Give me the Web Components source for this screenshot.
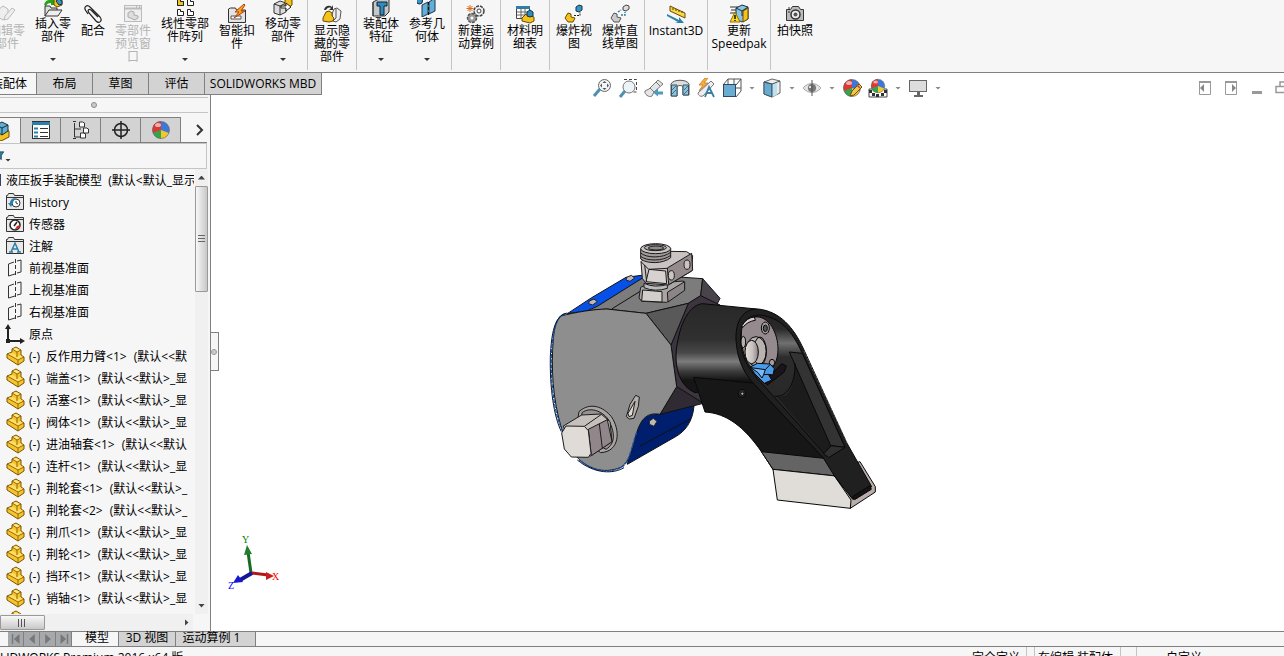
<!DOCTYPE html>
<html lang="zh-CN">
<head>
<meta charset="utf-8">
<title>SOLIDWORKS</title>
<style>
  html, body { margin: 0; height: 100%; overflow: hidden; }
  body { font: 12px/13px "Open Sans", "Noto Sans CJK SC", sans-serif; color: #000; background: #fff; }
</style>
</head>
<body>
<cad-app></cad-app>

<script>
const part = `<path d="M2 8l5-2V3l4-2 5 3v5l3 2v4l-6 4-11-7z" fill="#f7c52b" stroke="#7a5500"/><path d="M3 8l5-1 3 2v2l4-2 3 2-5 3z" fill="#ffdc66"/><path d="M8 3l3-1 4 2-3 2z" fill="#ffe68a"/><path d="M7 3l5 3 4-2M12 6v5M2 8l11 6 6-3M13 14v5" fill="none" stroke="#7a5500" stroke-width=".8"/>`;
const folder = `<path d="M1.500 17.500v-14h1l1-2h5l1 2h9v14z" fill="#e8e8e8" stroke="#333"/><path d="M2 5.500h16" stroke="#333"/>`;
const ball = `<circle cx="10" cy="10" r="8.500" fill="#3d78d8"/><path d="M10 10L2 6a9 9 0 0 1 8-4.500z" fill="#e03c30"/><path d="M10 10V1.500A8.500 8.500 0 0 0 2 13z" fill="#df3830"/><path d="M10 10L2 13a8.500 8.500 0 0 0 8 5.500z" fill="#37a547"/><path d="M10 10v8.500a8.500 8.500 0 0 0 8-5.500z" fill="#f0c72c"/><ellipse cx="7" cy="5" rx="3" ry="2" fill="#fff" opacity=".6"/><circle cx="10" cy="10" r="8.500" fill="none" stroke="#666" stroke-opacity=".6"/>`;

// all icons are drawn on a 20x20 grid
const icons = {
  part,
  edit: `<g fill="#eee" stroke="#bbb"><path d="M1 6l5-4 5 3v7l-5 4-5-3z"/><path d="M8 12l7-8 3 2-7 9-4 1z"/></g>`,
  insert: `<path d="M1 8c1-4 3-5 6-5V0h5v8H8V6C5 6 4 7 3 9z" fill="#27a31d"/><path d="M11 3l4-3 4 2v6l-5 2-3-2z" fill="#f4c21d" stroke="#6b4b00"/><path d="M13 4l3-2 3 2v3l-3 1z" fill="#3a93c4" stroke="#134"/><path d="M2 19V9h5l1 2h6v3" fill="#ddd" stroke="#333"/><path d="M2 19l4-6h13l-4 6z" fill="#eee" stroke="#333"/>`,
  clip: `<path d="M5 10L3 7C0 3 4 0 7 3l10 10c3 4-1 7-4 4L6 9C4 6 6 4 9 7l6 6" fill="none" stroke="#222" stroke-width="1.200"/>`,
  preview: `<rect x="1.500" y="1.500" width="17" height="16" fill="#eee" stroke="#bbb"/><path d="M2 4.500h16M13 3h1M16 3h1" stroke="#bbb" stroke-width="2"/><path d="M5 9l3-2 3 1v3l4 1v2l-3 2-7-3z" fill="#ddd" stroke="#aaa"/>`,
  pattern: `<g fill="#fff" stroke="#222"><path d="M2.500 2.500h3v2h3v4h-6zM12.500 2.500h3v2h3v4h-6zM2.500 12.500h3v2h3v4h-6zM12.500 12.500h3v2h3v4h-6z"/><path d="M2.500 2.500h3v2h3v4h-6z" fill="#f4c21d"/></g>`,
  smart: `<path d="M1.500 18.500V5l2-1h5l1 2h9v12.500z" fill="#e4e4e4" stroke="#333"/><path d="M4 12h10v3H4z" fill="#fff" stroke="#555"/><path d="M17 0L8 8h4l-5 6 11-7h-4l4-6z" fill="#f8a51b" stroke="#b33f0b"/>`,
  move: `<path d="M1 7l6-3 6 2v9l-6 3-6-2z" fill="#ddd" stroke="#333"/><path d="M1 7l6 2 6-3M7 9v9" fill="none" stroke="#333"/><path d="M12 3l4-2 3 2v5l-4 3-3-2z" fill="#f4c21d" stroke="#6b4b00"/><path d="M8 9h5V6l5 4-5 4v-3H8z" fill="#fff" stroke="#222"/>`,
  showhide: `<path d="M2 6c1-5 6-5 8-3l1-2v5H7l2-2C7 3 5 4 4 6z" fill="#333"/><path d="M10 10l2-5 3-1 4 3-1 8-4 3-3-1z" fill="#eee" stroke="#555"/><path d="M14 5v9l-3 3" fill="none" stroke="#555"/><path d="M1 14l3-6 3-1 3 2v3l2 2-1 3-4 1-6-1z" fill="#f4c21d" stroke="#6b4b00"/>`,
  feature: `<path d="M2 5l6-3h10v13l-4 4H2z" fill="#c3c8cc" stroke="#333"/><path d="M6 5h10v4h-3v9H9V9H6z" fill="#318cb9" stroke="#123"/><path d="M2 5v14" stroke="#333"/>`,
  refgeo: `<circle cx="2.500" cy="4" r="3" fill="#3b95c4" stroke="#124"/><path d="M5 8l6-3v12l-6 3zM12 5l6-4v13l-6 3z" fill="#61b0d5" stroke="#235"/><path d="M11.500 0v20" stroke="#111" stroke-dasharray="3 2"/>`,
  motion: `<circle cx="13" cy="7" r="5" fill="#eee" stroke="#444" stroke-width="1.500" stroke-dasharray="3 1"/><circle cx="13" cy="7" r="2" fill="#fff" stroke="#444"/><circle cx="6" cy="14" r="4.500" fill="#999" stroke="#555" stroke-width="1.500" stroke-dasharray="3 1"/><circle cx="6" cy="14" r="1.500" fill="#fff"/><path d="M4 1v7M0.500 4.500h7M1.500 2l5 5M6.500 2l-5 5" stroke="#e46a12"/>`,
  bom: `<path d="M1.500 2.500h13v12h-13z" fill="#fff" stroke="#444"/><path d="M1 3.500h14" stroke="#2b7fa9" stroke-width="3"/><path d="M2 8h12M2 11h12M6 4v10M10 4v10" stroke="#666"/><path d="M7 14l4-4 8 3v4l-4 2-8-2z" fill="#f4c21d" stroke="#6b4b00"/><path d="M12 8l3-2 3 2v4l-3 1-3-1z" fill="#2f8bc0" stroke="#134"/>`,
  explode: `<path d="M1 14l3-5 3 1v3l4 1-2 4H4z" fill="#f4c21d" stroke="#6b4b00"/><path d="M12 3l3-2 3 1v4l-3 2-3-1z" fill="#3b95c4" stroke="#134"/><path d="M10 11.500h6V8" fill="none" stroke="#222" stroke-dasharray="2 1"/>`,
  explodeline: `<path d="M1 14l3-5 3 1v3l4 1-2 4H4z" fill="#ccc" stroke="#555"/><path d="M13 3l3-2 3 1v3l-3 2-3-1z" fill="#ddd" stroke="#444"/><path d="M8 8l3-2m0 5h4V8" fill="none" stroke="#2b7fa9" stroke-dasharray="2 1" stroke-width="1.500"/>`,
  instant: `<path d="M4 2l15 7v5L4 7z" fill="#f8d64a" stroke="#6b4b00"/><path d="M7 4v2m3-1v2m3-1v2m3-1v2" stroke="#5a4300"/><path d="M1 10l12 6v-3l5 6H9l3-1L1 12z" fill="#2f80a8"/>`,
  speedpak: `<path d="M1 3h8M2 6h6M1 9h6" stroke="#333"/><path d="M7 4l6-3 6 2v12l-6 3-6-3z" fill="#8fc3df" stroke="#134"/><path d="M14 7l5-3v11l-5 3z" fill="#f4c21d" stroke="#6b4b00"/><path d="M7 4l6 3 6-4M13 7v5" stroke="#134" fill="none"/><path d="M6 8l5 10H1z" fill="#ffd91c" stroke="#907000"/><path d="M6 11v4m0 1v1" stroke="#111" stroke-width="1.500"/>`,
  camera: `<path d="M1.500 5.500h4l2-3h6l2 3h3v11h-17z" fill="#bbb" stroke="#333"/><circle cx="10.500" cy="10.500" r="4.500" fill="#eee" stroke="#333" stroke-width="1.500"/><circle cx="10.500" cy="10.500" r="2" fill="#555"/><path d="M3 8h2M3 4h2" stroke="#333"/>`,
  zoomfit: `<circle cx="12.500" cy="7.500" r="6" fill="#f2f6f8" stroke="#666"/><path d="M8 11l-6 7" stroke="#4f8fb0" stroke-width="3"/><path d="M12.500 3l2 2h-4zM12.500 12l2-2h-4zM8 7.500l2-2v4zM17 7.500l-2-2v4z" fill="#555"/>`,
  zoomarea: `<path d="M6 1.500h12.500V14H15" fill="none" stroke="#444" stroke-dasharray="3 2"/><circle cx="11" cy="9" r="6" fill="#edf4f7" stroke="#777"/><path d="M7 13l-5 6" stroke="#4f8fb0" stroke-width="3"/>`,
  prevview: `<path d="M1 13l4-2 9-9 5 4-9 8-2 4c-3 2-8-2-7-5z" fill="#e5e5e5" stroke="#777"/><path d="M6 10l4 4M12 4l4 4" stroke="#777"/><path d="M9 14.500l5-4v3h5v3h-5v2z" fill="#4f9bc0"/>`,
  section: `<path d="M1 6c2-5 16-5 18 0v11h-6V9c-1-2-5-2-6 0v9H1z" fill="#ddd" stroke="#555"/><path d="M1.500 7h5.500v11h-5.500zM13 7h5.500v10H13z" fill="#8fc3dc" stroke="#356"/><path d="M2 12l4-4M2 16l4-4M14 12l4-4M14 16l4-4" stroke="#356" stroke-width=".8"/>`,
  annot: `<path d="M9 0L3 7h4l-4 6 9-8H8l4-5z" fill="#f9ae40" stroke="#d08a30"/><path d="M2 15L15 3l3 3L7 18c-3 1-5-1-5-3z" fill="#eee" stroke="#777"/><path d="M9 19l4-10 5 10M11 15h5" fill="none" stroke="#397fa6" stroke-width="1.800"/>`,
  orient: `<path d="M1 7l5-6h13v12l-5 6M6 1v6M14 7l5-6M14 10h5M12 1v6" fill="none" stroke="#555"/><rect x="1.500" y="6.500" width="12" height="12" fill="#6badd0" stroke="#346"/>`,
  display: `<path d="M2 4l8-3 8 2v12l-8 4-8-3z" fill="#eee" stroke="#666"/><path d="M2 4l8 2v13l-8-3z" fill="#65acd0" stroke="#456"/><path d="M10 6l5-2v13l-5 2z" fill="#bfe1ee"/><path d="M2 4l8 2 8-3M10 6v13" fill="none" stroke="#456"/>`,
  eye: `<path d="M1 10c5-6 13-6 18 0-5 6-13 6-18 0z" fill="#e2e2e2" stroke="#aaa"/><circle cx="10" cy="10" r="4" fill="#777"/><path d="M10 2v16" stroke="#555"/><circle cx="8" cy="9" r="1" fill="#fff"/>`,
  ball,
  ballpen: ball + `<path d="M8 18l2-5 7-7 3 3-8 8z" fill="#f3c84a" stroke="#6e4d12"/><path d="M15 7l3 3" stroke="#b44" stroke-width="1.500"/>`,
  scene: `<path d="M1 11h18v8H1z" fill="#fff" stroke="#444"/><path d="M1 12h3v3H1zM4 15h3v3H4zM8 16h3v3H8zM13 15h3v3h-3zM16 12h3v3h-3z" fill="#333"/><g transform="translate(2 0) scale(.8)">${ball}</g>`,
  monitor: `<rect x="1.500" y="2.500" width="17" height="11" fill="#ddd" stroke="#666"/><path d="M9 14h3v3h3v2H6v-2h3z" fill="#666"/>`,
  cube: `<path d="M1 10l8-4 9 4v6l-8 4-9-5z" fill="#f4c21d" stroke="#6b4b00"/><path d="M5 4l6-3 6 3v6l-6 4-6-4z" fill="#65acd0" stroke="#134"/><path d="M5 4l6 3 6-3M11 7v7" fill="none" stroke="#134"/>`,
  props: `<rect x="1.500" y="1.500" width="17" height="17" fill="#fff" stroke="#333"/><path d="M1 3.500h18" stroke="#2d7fa8" stroke-width="3"/><path d="M3 8.500h4M3 12.500h4M3 16.500h4" stroke="#2d7fa8" stroke-width="2"/><path d="M9 8.500h8M9 12.500h8M9 16.500h8" stroke="#333"/>`,
  config: `<path d="M3.500 3v14h8M4 9h6M2 1.500h3M2 18.500h3" fill="none" stroke="#333"/><g fill="#fff" stroke="#333"><path d="M8.500 2h3l2 1v4h-5zM12.500 8h3l2 1v4h-5zM9.500 13h3l2 1v4h-5z"/></g>`,
  target: `<circle cx="10" cy="10" r="6.500" fill="none" stroke="#222" stroke-width="1.500"/><path d="M10 1v18M1 10h18" stroke="#222" stroke-width="1.500"/>`,
  chevron: `<path d="M7 5l5 5-5 5" fill="none" stroke="#333" stroke-width="2"/>`,
  filter: `<path d="M6 3h12l-4 6v7l-3-2V9z" fill="#2d7fa8" stroke="#123"/>`,
  history: folder + `<circle cx="11" cy="11" r="4" fill="#fff" stroke="#333"/><path d="M11 9v2l2 1" stroke="#333" fill="none"/><path d="M3 11l3 4 2-4c0-2 2-4 4-4-4-2-7 1-7 4z" fill="#2d7fa8"/>`,
  sensor: folder + `<circle cx="10" cy="11" r="5" fill="#fff" stroke="#222" stroke-width="1.500"/><path d="M9 12l3-4" stroke="#222" stroke-width="1.500"/><path d="M10 15l2-3 3-1c0 3-2 4-5 4z" fill="#d82a1c"/>`,
  note: folder + `<path d="M6 16l4-9 4 9M7 13h6M4 16h4M12 16h4" fill="none" stroke="#2d7fa8" stroke-width="1.500"/>`,
  plane: `<path d="M9 4L3.500 6v12L10 16M12 3l4-1v12l-4 1" fill="none" stroke="#333"/><path d="M10.500 1v18" stroke="#333" stroke-dasharray="4 2"/>`,
  origin: `<path d="M3 3v14h13" fill="none" stroke="#222" stroke-width="2"/><path d="M0 5l3-5 3 5zM15 14l5 3-5 3zM1 15h4v4H1z" fill="#222"/>`,
  paneleft: `<path d="M4.500 4v12.500h11V4z" fill="none" stroke="#999"/><path d="M4 4h12" stroke="#999" stroke-width="2"/><path d="M9 6v8l-4-4z" fill="#888"/>`,
  paneright: `<path d="M4.500 4v12.500h11V4z" fill="none" stroke="#999"/><path d="M4 4h12" stroke="#999" stroke-width="2"/><path d="M11 6v8l4-4z" fill="#888"/>`,
  minimize: `<path d="M5 14.500h10" stroke="#999" stroke-width="3"/>`,
  restore: `<path d="M3 8.500h9v6H3zM7 8V4h9v8" fill="none" stroke="#999" stroke-width="1.500"/>`,
  first: `<path d="M5 3v14" stroke="#777" stroke-width="2"/><path d="M15 3v14l-8-7z" fill="#777"/>`,
  back: `<path d="M14 3v14l-8-7z" fill="#777"/>`,
  next: `<path d="M6 3v14l8-7z" fill="#777"/>`,
  last: `<path d="M15 3v14" stroke="#777" stroke-width="2"/><path d="M5 3v14l8-7z" fill="#777"/>`
};

function define(name, css, html) {
  customElements.define(name, class extends HTMLElement {
    constructor() {
      super();
      this.attachShadow({ mode: "open" });
    }
    connectedCallback() {
      const markup = typeof html === "function" ? html(this) : html;
      this.shadowRoot.innerHTML = `<style>${css}</style>${markup}`;
    }
  });
}

const reset = `button { font: inherit; color: inherit; background: none; border: 0; padding: 0; margin: 0; }`;

define("cad-icon", `
  :host { display: block; flex: none; width: 20px; height: 20px; }
  svg { display: block; width: 100%; height: 100%; }
`, el => `<svg viewBox="0 0 20 20" aria-hidden="true">${icons[el.getAttribute("name")] || ""}</svg>`);

define("drop-caret", `
  :host { display: block; flex: none; width: 6px; height: 3px; background: var(--caret, #333); clip-path: polygon(0 0, 100% 0, 50% 100%); }
`, ``);

define("ribbon-button", reset + `
  :host { display: block; flex: none; width: 46px; height: 72px; }
  :host([size="narrow"]) { width: 34px; }
  :host([size="wide"]) { width: 58px; }
  :host([size="latin"]) { width: 60px; }
  :host([drop]) button { margin-top: -7px; }
  :host([disabled]) button { color: #b4b4b4; }
  button { width: 100%; height: 72px; padding: 4px 2px 0; display: flex; flex-direction: column; align-items: center; position: relative; }
  drop-caret { position: absolute; bottom: 4px; }
`, el => `<button ${el.hasAttribute("disabled") ? "disabled" : ""}>
  <cad-icon name="${el.getAttribute("icon")}"></cad-icon>
  <span><slot></slot></span>
  ${el.hasAttribute("drop") ? "<drop-caret></drop-caret>" : ""}
</button>`);

define("ribbon-bar", `
  :host { display: flex; height: 72px; overflow: hidden; background: #f6f6f6; border-bottom: 1px solid #808080; }
  i { flex: none; width: 1px; height: 70px; margin: 0 1px; background: #c4c4c4; }
  style + ribbon-button { margin-left: -16px; }
`, `
  <ribbon-button icon="edit" disabled>编辑零部件</ribbon-button>
  <ribbon-button icon="insert" drop>插入零部件</ribbon-button>
  <ribbon-button icon="clip" size="narrow">配合</ribbon-button>
  <ribbon-button icon="preview" disabled>零部件预览窗口</ribbon-button>
  <ribbon-button icon="pattern" size="wide" drop>线性零部件阵列</ribbon-button>
  <ribbon-button icon="smart">智能扣件</ribbon-button>
  <ribbon-button icon="move" drop>移动零部件</ribbon-button><i></i>
  <ribbon-button icon="showhide">显示隐藏的零部件</ribbon-button><i></i>
  <ribbon-button icon="feature" drop>装配体特征</ribbon-button>
  <ribbon-button icon="refgeo" drop>参考几何体</ribbon-button><i></i>
  <ribbon-button icon="motion">新建运动算例</ribbon-button><i></i>
  <ribbon-button icon="bom">材料明细表</ribbon-button><i></i>
  <ribbon-button icon="explode">爆炸视图</ribbon-button>
  <ribbon-button icon="explodeline">爆炸直线草图</ribbon-button><i></i>
  <ribbon-button icon="instant" size="latin">Instant3D</ribbon-button><i></i>
  <ribbon-button icon="speedpak" size="latin">更新 Speedpak</ribbon-button><i></i>
  <ribbon-button icon="camera">拍快照</ribbon-button>
`);

define("command-tabs", reset + `
  :host { display: flex; flex: none; height: 22px; background: #d3d3d3; border-bottom: 1px solid #808080; box-sizing: border-box; }
  button { width: 56px; border-right: 1px solid #808080; white-space: nowrap; display: flex; align-items: center; justify-content: center; }
  button.on { width: 37px; justify-content: flex-end; padding-right: 9px; background: #f6f6f6; overflow: hidden; box-sizing: border-box; }
  button:last-child { width: 117px; }
`, `
  <button class="on">装配体</button><button>布局</button><button>草图</button><button>评估</button><button>SOLIDWORKS MBD</button>
`);

// view toolbar floating over the top of the graphics area
define("view-toolbar", reset + `
  :host { display: flex; flex: 1; height: 30px; padding-left: 20px; justify-content: center; align-items: center; --caret: #888; }
  button { width: 26px; height: 26px; display: grid; place-items: center; }
  button.d { width: 14px; }
`, () => ["zoomfit", "zoomarea", "prevview", "section", "annot", "orient", "", "display", "", "eye", "", "ballpen", "scene", "", "monitor", ""]
  .map(n => n ? `<button><cad-icon name="${n}"></cad-icon></button>` : `<button class="d"><drop-caret></drop-caret></button>`).join(""));

define("window-controls", reset + `
  :host { display: flex; flex: none; width: 92px; height: 30px; overflow: hidden; align-items: center; }
  button { flex: none; width: 26px; display: grid; place-items: center; }
`, () => ["paneleft", "paneright", "minimize", "restore"].map(n => `<button><cad-icon name="${n}"></cad-icon></button>`).join(""));

define("manager-tabs", reset + `
  :host { display: flex; height: 26px; margin-top: 4px; margin-right: 3px; border-bottom: 1px solid #808080; box-sizing: border-box; }
  button { flex: none; box-sizing: border-box; width: 40px; border-top: 1px solid #808080; border-right: 1px solid #808080; background: #d3d3d3; display: flex; align-items: center; justify-content: center; }
  button.on { width: 21px; background: #f6f6f6; justify-content: flex-end; padding-right: 9px; overflow: hidden; margin-bottom: -1px; }
  button.more { flex: 1; min-width: 0; background: none; border: 0; padding-left: 12px; }
`, `
  <button class="on"><cad-icon name="cube"></cad-icon></button>
  <button><cad-icon name="props"></cad-icon></button>
  <button><cad-icon name="config"></cad-icon></button>
  <button><cad-icon name="target"></cad-icon></button>
  <button><cad-icon name="ball"></cad-icon></button>
  <button class="more"><cad-icon name="chevron"></cad-icon></button>
`);

define("tree-item", `
  :host { display: flex; align-items: center; height: 22px; gap: 4px; padding-left: 5px; white-space: pre; }
  :host([root]) { padding-left: 0; gap: 5px; }
  b { flex: none; width: 1px; height: 12px; background: #346; }
`, el => (el.hasAttribute("root") ? `<b></b>` : `<cad-icon name="${el.getAttribute("icon") || "part"}"></cad-icon>`) + `<span><slot></slot></span>`);

define("scroll-bar", reset + `
  :host { display: flex; background: #f0f0f0; }
  :host([dir="v"]) { flex-direction: column; width: 13px; margin-right: 2px; }
  :host([dir="h"]) { height: 17px; margin-right: 17px; align-items: center; }
  button { flex: none; display: grid; place-items: center; width: 13px; height: 17px; }
  .thumb { box-sizing: border-box; border: 1px solid #999; border-radius: 1px; display: flex; align-items: center; justify-content: center; }
  :host([dir="v"]) .thumb { height: 106px; background: linear-gradient(90deg, #f8f8f8, #c8c8c8); }
  :host([dir="h"]) .thumb { width: 45px; height: 15px; background: linear-gradient(#f8f8f8, #c8c8c8); }
  .grip { width: 7px; height: 8px; background: repeating-linear-gradient(#666 0 1px, transparent 1px 3px); }
  :host([dir="h"]) .grip { width: 9px; background: repeating-linear-gradient(90deg, #555 0 1px, transparent 1px 3px); }
  .room { flex: 1; }
  .up, .down { width: 7px; height: 4px; background: #444; clip-path: polygon(50% 0, 100% 100%, 0 100%); }
  .down { clip-path: polygon(0 0, 100% 0, 50% 100%); }
  .right { width: 4px; height: 7px; background: #444; clip-path: polygon(0 0, 100% 50%, 0 100%); }
`, el => el.getAttribute("dir") === "v"
  ? `<button><i class="up"></i></button><div class="thumb"><i class="grip"></i></div><div class="room"></div><button><i class="down"></i></button>`
  : `<div class="thumb"><i class="grip"></i></div><div class="room"></div><button><i class="right"></i></button>`);

const parts = ["反作用力臂<1>", "端盖<1>", "活塞<1>", "阀体<1>", "进油轴套<1>", "连杆<1>", "荆轮套<1>", "荆轮套<2>", "荆爪<1>", "荆轮<1>", "挡环<1>", "销轴<1>"];
const tails = { "反作用力臂<1>": "默", "进油轴套<1>": "默认", "荆轮套<1>": "默认>_", "荆轮套<2>": "默认>_" };
const esc = s => s.replace(/</g, "&lt;").replace(/>/g, "&gt;");

define("feature-panel", reset + `
  :host { box-sizing: border-box; flex: none; width: 211px; display: flex; flex-direction: column; background: #f6f6f6; border-right: 1px solid #808080; }
  .split { height: 14px; margin: 2px 2px 0 0; border: solid #c4c4c4; border-width: 1px 0; display: grid; place-items: center; padding-right: 20px; }
  .split i { width: 4px; height: 4px; border: 1px solid #888; border-radius: 50%; background: #ccc; }
  .filter { box-sizing: border-box; height: 26px; margin-right: 3px; border: 1px solid #c4c4c4; border-left: 0; display: flex; align-items: center; overflow: hidden; }
  .filter cad-icon { width: 12px; height: 12px; margin-left: -7px; }
  .filter drop-caret { margin-top: 8px; }
  .body { flex: 1; display: flex; min-height: 0; }
  .tree { flex: 1; min-width: 0; overflow: hidden; margin-right: 1px; }
  .tree span { margin: 0 4px 0 3px; }
`, () => `
  <div class="split"><i></i></div>
  <manager-tabs></manager-tabs>
  <button class="filter" aria-label="过滤器"><cad-icon name="filter"></cad-icon><drop-caret></drop-caret></button>
  <div class="body">
    <div class="tree">
      <tree-item root>液压扳手装配模型  (默认&lt;默认_显示</tree-item>
      <tree-item icon="history">History</tree-item>
      <tree-item icon="sensor">传感器</tree-item>
      <tree-item icon="note">注解</tree-item>
      <tree-item icon="plane">前视基准面</tree-item>
      <tree-item icon="plane">上视基准面</tree-item>
      <tree-item icon="plane">右视基准面</tree-item>
      <tree-item icon="origin">原点</tree-item>
      ${parts.map(p => `<tree-item>(-) <span>${esc(p)}</span> (默认&lt;&lt;${esc(tails[p] || "默认>_显")}</tree-item>`).join("")}
      <tree-item></tree-item>
    </div>
    <scroll-bar dir="v"></scroll-bar>
  </div>
  <scroll-bar dir="h"></scroll-bar>
`);

// hydraulic wrench, 3 units to the pixel
define("wrench-model", `
  :host { display: block; width: 350px; height: 285px; }
  svg { display: block; width: 100%; height: 100%; }
`, `
<svg viewBox="0 0 1050 855" stroke-linejoin="round">
  <defs>
    <linearGradient id="cyl" x1="0" y1="0" x2="0" y2="1">
      <stop offset="0" stop-color="#282828"/><stop offset=".4" stop-color="#303030"/><stop offset=".55" stop-color="#484848"/>
      <stop offset=".65" stop-color="#7c7c7c"/><stop offset=".76" stop-color="#3c3c3c"/><stop offset=".86" stop-color="#151515"/><stop offset="1" stop-color="#151515"/>
    </linearGradient>
    <linearGradient id="bore" x1="0" y1="0" x2="0" y2="1">
      <stop offset="0" stop-color="#222"/><stop offset=".1" stop-color="#2a2a2a"/><stop offset=".2" stop-color="#707070"/><stop offset=".3" stop-color="#2c2c2c"/><stop offset="1" stop-color="#222"/>
    </linearGradient>
    <linearGradient id="nut"><stop offset="0" stop-color="#e4dfda"/><stop offset=".55" stop-color="#c9c3c0"/><stop offset="1" stop-color="#8c8285"/></linearGradient>
  </defs>
  <g stroke="#111" stroke-width="3">
    <path fill="#001e6e" d="M330 533L462 513C458 560 435 590 405 606L262 688 280 600Q300 545 330 533z"/>
    <path fill="none" d="M300 633L452 552"/>
    <path fill="#0650e8" d="M82 236L155 188 258 127 312 120 309 135 165 224z"/>
    <path fill="#7c7c7c" d="M140 228L172 214 306 130 430 127 488 131 482 182 445 205 318 235 200 222z"/>
    <path fill="none" d="M215 222L310 163"/>
    <path fill="#49434b" d="M488 131L540 190 530 210 482 182z"/>
    <path fill="#3c343e" d="M482 182L540 210 490 505 410 455 393 330 445 205z"/>
    <path fill="#595959" d="M318 235L445 205 393 330z"/>
    <path fill="#302a33" d="M410 455L490 505 360 538z"/>
    <path fill="#8e8e8e" d="M62 243C110 231 160 223 200 222L318 235 393 330 410 455 360 538C315 530 300 560 288 600 274 657 267 680 242 697 190 719 140 700 110 665L66 585C37 490 33 400 40 310Q44 260 62 243z"/>
  </g>
  <path fill="none" stroke="#174f9f" stroke-width="4" stroke-dasharray="12 3" d="M76 236C44 244 38 300 34 365 32 460 46 540 66 585M118 675C165 713 215 715 247 695 270 680 275 630 291 590"/>
  <path fill="none" stroke="#07152f" stroke-width="3" d="M82 234C42 240 34 300 31 365 29 460 42 545 64 590M112 675C165 718 220 717 252 698"/>
  <g fill="#bdb8b5" stroke="#222" stroke-width="3"><path d="M260 127l14-6 10 8-14 10-12-4zM148 198l14-6 10 8-14 10-12-4zM328 558l12-8 11 9-9 15-14-6z"/></g>
  <!-- hose fitting -->
  <g stroke="#1c1c1c" stroke-width="3">
    <path fill="#aaa5a3" d="M302 157L325 146 430 138 434 162 380 202 305 199 297 189z"/>
    <path fill="#d2cecb" d="M308 165L366 170 366 201 305 198z"/><path fill="#8c8587" d="M382 172L434 140V166L384 201z"/>
    <path fill="#bbb" d="M312 145Q345 160 382 148V160Q345 172 312 158z"/>
    <path fill="#c9c4c1" d="M303 80L335 48 440 50 458 62 455 108 385 150 318 145 307 130z"/>
    <path fill="#958b8d" d="M382 99L455 55 458 106 386 149z"/><path fill="#d7d2cf" d="M327 103L377 108 380 146 318 140z"/>
    <path fill="none" d="M303 80L326 103 382 100M314 90L320 140"/>
    <ellipse cx="394" cy="121" rx="9" ry="14" fill="#cbc5c2"/><ellipse cx="441" cy="89" rx="9" ry="14" fill="#cbc5c2"/>
    <path fill="#a09b99" d="M302 42V72C320 87 370 87 392 68V40z"/>
    <path fill="none" d="M302 54C320 70 370 70 392 52M302 64C320 79 370 79 392 61"/>
    <ellipse cx="347" cy="41" rx="45" ry="15" fill="#c9c4c1"/><ellipse cx="346" cy="38" rx="33" ry="9" fill="#b5b0ae"/><ellipse cx="348" cy="39" rx="23" ry="6" fill="#918b8c"/>
  </g>
  <!-- square drive -->
  <g stroke="#1c1c1c" stroke-width="3">
    <path fill="#aaa4a2" d="M117 530C150 500 190 515 214 545 242 585 240 650 182 653L105 600z"/>
    <path fill="#979191" d="M126 533C150 515 185 527 204 552 225 590 228 625 198 643L120 600z"/>
    <path fill="#c6c0bd" d="M70 573L125 540 183 537 210 560 216 620 152 663 100 650z"/>
    <path fill="#91868a" d="M145 583L202 554 216 620 154 662z"/>
    <path fill="none" d="M133 574L183 539M178 567L187 640"/>
    <path fill="#dfdbd6" d="M78 573L133 574 145 587 153 655 145 667 94 666 73 642 65 594z"/>
    <path fill="#b5afac" d="M287 481L298 486 295 514 282 550 268 552 259 545 270 508z"/><path fill="#ded9d5" d="M285 499L277 541 267 545 264 535z"/>
  </g>
  <!-- reaction arm -->
  <g transform="translate(390 165)" stroke="#080808" stroke-width="3">
    <path fill="url(#cyl)" d="M98 41L260 57 300 120 250 280 75 308C10 280 15 190 22 160 33 90 63 43 98 41z"/>
    <path fill="#171717" d="M71 262L258 280 470 500 495 558 310 540 275 486C222 410 170 370 105 366z"/>
    <path fill="#646464" d="M274 485L462 505 498 558 309 538z"/>
    <path fill="#e0ddd8" d="M309 538L497 558 548 625 541 655 322 630z"/>
    <path fill="#b8adaa" d="M492 556L550 628 603 590 560 518 570 515 616 590V606L541 655 543 630z"/>
    <path fill="#202020" d="M198 150C195 75 235 55 265 57 330 65 370 110 402 180L530 458 605 590 548 628 492 556 460 504 254 284C212 240 201 195 198 150z"/>
    <path fill="url(#bore)" d="M212 150C210 90 240 76 270 75 330 82 365 120 397 190L525 472 470 498 290 296C230 235 214 200 212 150z"/>
    <path fill="#1c1c1c" stroke="none" d="M373 210C377 260 370 300 345 318L322 322 468 492 484 466z"/>
    <path fill="#333" d="M358 186L397 190 525 472 482 467z"/><path fill="#303030" d="M484 467L525 472 476 503 461 491z"/>
    <path fill="none" d="M375 220C377 280 350 325 315 318"/>
    <path fill="#958b8f" d="M216 110C240 73 275 72 300 102 330 142 330 200 310 230L243 232C216 200 210 150 216 110z"/>
    <path fill="#d4cfcb" d="M216 107Q230 83 253 81L256 91Q232 94 218 113z"/>
    <ellipse cx="258" cy="184" rx="31" ry="44" fill="#b9b3b0"/><ellipse cx="270" cy="184" rx="19" ry="43" fill="none"/><ellipse cx="245" cy="186" rx="20" ry="35" fill="url(#nut)"/>
    <ellipse cx="286" cy="114" rx="12" ry="18" fill="#a69d9e"/><ellipse cx="286" cy="115" rx="6" ry="10" fill="#555"/><ellipse cx="220" cy="156" rx="7" ry="17" fill="#b8b0ae"/><ellipse cx="306" cy="218" rx="8" ry="10" fill="#a69d9e"/>
    <path fill="#19151b" d="M307 251L335 221 349 228 343 246 292 285 283 276z"/>
    <path fill="#4b9be8" d="M241 231L262 220 300 222 313 236 309 255 295 253 305 270 283 280 254 251z"/><path fill="#76b9f5" d="M243 233L286 239 281 254 276 264 264 248z"/><path fill="none" d="M286 239L300 224M281 254L295 253"/>
    <ellipse cx="216" cy="310" rx="11" ry="12" fill="#2d2d2d"/><circle cx="217" cy="311" r="5" fill="#aaa"/>
    <path fill="#151216" d="M547 620L600 587 604 598 554 629z"/>
    <path fill="none" stroke="#777" stroke-width="2" stroke-dasharray="8 4" d="M402 183L532 460"/>
  </g>
</svg>`);

define("axis-triad", `
  :host { display: block; width: 70px; height: 75px; }
  text { font: 10px "Liberation Serif", serif; }
`, `
<svg width="70" height="75" viewBox="0 0 70 75">
  <path d="M31 48L28 27" stroke="#176b20" stroke-width="3"/><path d="M27 20l5 9-8 1z" fill="#217e2a"/>
  <path d="M32 48L48 50" stroke="#b01818" stroke-width="3"/><path d="M54 51l-8 4v-8z" fill="#c91e1e"/>
  <path d="M32 48L20 55" stroke="#151597" stroke-width="4"/><path d="M13 58l5-8 5 7z" fill="#1717d2"/>
  <text x="22" y="18" fill="#008000">Y</text><text x="52" y="55" fill="#f00">X</text><text x="8" y="64" fill="#00f">Z</text>
</svg>`);

define("graphics-area", reset + `
  :host { display: block; flex: 1; position: relative; background: #fff; overflow: hidden; }
  wrench-model { position: absolute; left: 329px; top: 140px; }
  axis-triad { position: absolute; left: 9px; bottom: 31px; }
  .handle { position: absolute; left: -1px; top: 237px; box-sizing: border-box; width: 9px; height: 39px; background: #f6f6f6; border: 1px solid #808080; border-left: 0; display: grid; place-items: center; }
  .handle i { width: 4px; height: 4px; border: 1px solid #999; border-radius: 50%; background: #ccc; }
`, `<wrench-model></wrench-model><axis-triad></axis-triad><button class="handle" aria-label="折叠"><i></i></button>`);

define("sheet-tabs", reset + `
  :host { display: flex; height: 14px; line-height: 12px; padding-left: 8px; background: #f6f6f6; border: solid #808080; border-width: 1px 0; }
  button { box-sizing: border-box; height: 14px; line-height: 12px; padding-bottom: 2px; border-right: 1px solid #808080; white-space: nowrap; background: #d3d3d3; }
  .nav { width: 16px; padding: 0; background: #a6a9ac; display: grid; place-items: center; }
  .nav cad-icon { width: 14px; height: 14px; }
  .on { width: 47px; padding-left: 4px; background: #f6f6f6; }
  .a { width: 57px; }
  .b { width: 80px; padding-right: 8px; }
`, `
  ${["first", "back", "next", "last"].map(n => `<button class="nav"><cad-icon name="${n}"></cad-icon></button>`).join("")}
  <button class="on">模型</button><button class="a">3D 视图</button><button class="b">运动算例 1</button>
`);

define("status-bar", `
  :host { display: flex; height: 24px; line-height: 21px; background: #f6f6f6; white-space: nowrap; overflow: hidden; }
  .app { flex: 1; margin-left: -16px; }
  span { box-sizing: border-box; flex: none; border-right: 1px solid #c4c4c4; }
  .state { width: 55px; }
  .gap { width: 8px; }
  .mode { width: 86px; padding-left: 3px; }
  .gap2 { width: 16px; }
  .unit { width: 147px; padding-left: 29px; border: 0; display: flex; gap: 16px; }
  b { font-weight: 400; }
`, `
  <div class="app">SOLIDWORKS Premium 2016 x64 版</div>
  <span class="state">完全定义</span><span class="gap"></span><span class="mode">在编辑 装配体</span><span class="gap2"></span>
  <span class="unit"><b>自定义</b><b>▴</b></span>
`);

define("cad-app", `
  /* the status bar runs past the lower edge of the window */
  :host { display: flex; flex-direction: column; height: calc(100vh + 15px); }
  .top { display: flex; height: 22px; position: relative; z-index: 1; }
  .main { flex: 1; display: flex; min-height: 0; }
`, `
  <ribbon-bar></ribbon-bar>
  <div class="top"><command-tabs></command-tabs><view-toolbar></view-toolbar><window-controls></window-controls></div>
  <div class="main"><feature-panel></feature-panel><graphics-area></graphics-area></div>
  <sheet-tabs></sheet-tabs>
  <status-bar></status-bar>
`);
</script>
</body>
</html>
